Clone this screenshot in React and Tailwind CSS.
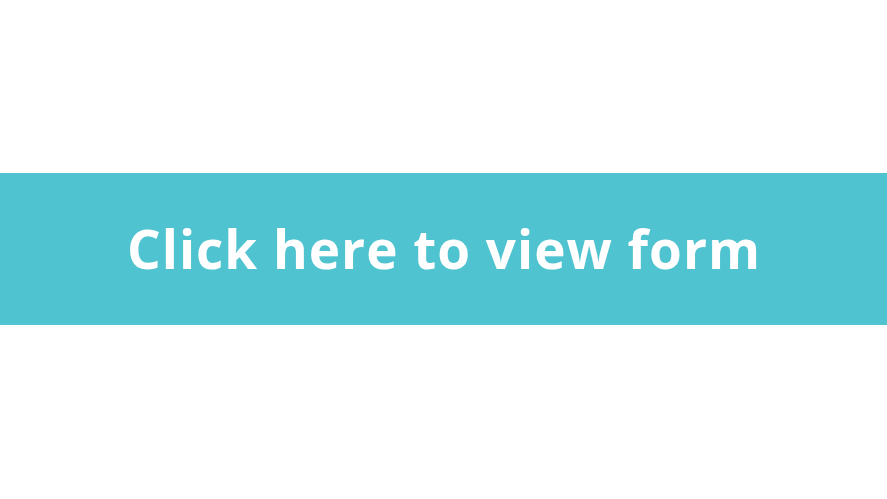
export default function App() {
  return (
    <div className="w-[887px] h-[499px] bg-white flex flex-col">
      <div className="mt-[173px] h-[152px] bg-[#4fc3cf] flex items-center justify-center">
        <span className="text-white font-bold text-[53px] leading-none tracking-[1px] pl-[1px] mb-[1px]" style={{ fontFamily: '"Open Sans", sans-serif' }}>
          Click here to view form
        </span>
      </div>
    </div>
  );
}
